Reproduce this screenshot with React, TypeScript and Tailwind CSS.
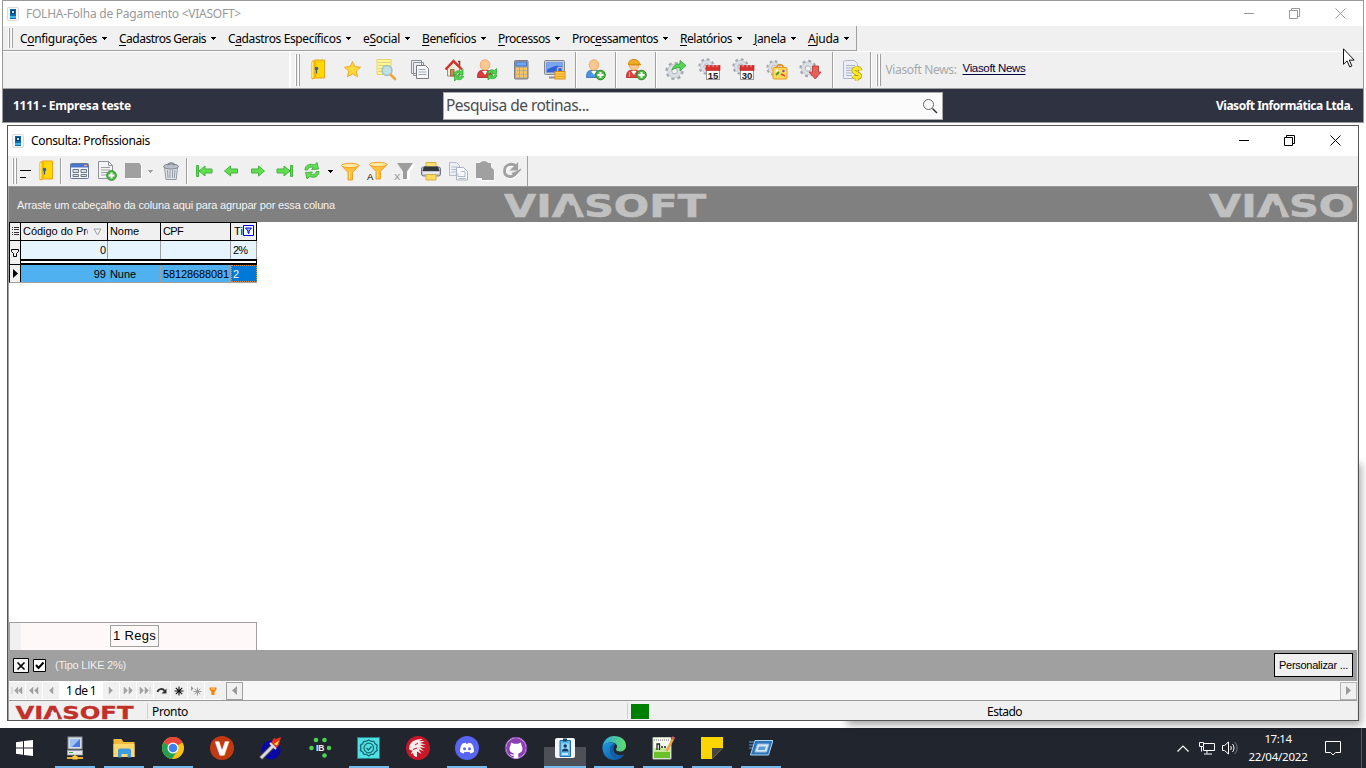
import React, { useLayoutEffect, useRef } from "react";

/* Text whose letter spacing is computed so that it fills a given width. */
function Fit({ w, className = "", children }: { w: number; className?: string; children: React.ReactNode }) {
  const ref = useRef<HTMLSpanElement>(null);
  useLayoutEffect(() => {
    const el = ref.current;
    if (!el) return;
    el.style.letterSpacing = "0px";
    const natural = el.getBoundingClientRect().width;
    const n = (el.textContent || "").length || 1;
    el.style.letterSpacing = `${(w - natural) / n}px`;
  }, [w]);
  return (
    <span ref={ref} className={`inline-block shrink-0 whitespace-nowrap ${className}`}>
      {children}
    </span>
  );
}

type SvgProps = { children: React.ReactNode; size?: number };
const Svg = ({ children, size = 24 }: SvgProps) => (
  <svg width={size} height={size} viewBox={`0 0 ${size} ${size}`} className="block shrink-0" fill="none">
    {children}
  </svg>
);

/* ---------- brand ---------- */
function Logo({ w, h, color, back, className = "" }: { w: number; h: number; color: string; back: string; className?: string }) {
  return (
    <svg width={w} height={h} viewBox="0 0 200 26" preserveAspectRatio="none" className={`block shrink-0 overflow-visible ${className}`}>
      <text x="-1" y="25.5" textLength="202" lengthAdjust="spacingAndGlyphs" fill={color} stroke={color} strokeWidth="0.6" className="font-['DejaVu_Sans',sans-serif] text-[34px] font-bold">
        VIASOFT
      </text>
      <path d="M60.5 14h8.5l3.2 12h-15z" fill={back} />
    </svg>
  );
}

/* ---------- shared icon parts ---------- */
const Cog = ({ cx, cy, s = 1 }: { cx: number; cy: number; s?: number }) => (
  <g transform={`translate(${cx} ${cy}) scale(${s})`}>
    <circle r="7.6" stroke="#a2a6ae" strokeWidth="3" strokeDasharray="3 2.970" />
    <circle r="5" stroke="#dcdfe5" strokeWidth="3.8" />
    <circle r="6.8" stroke="#b4b8bf" strokeWidth="0.6" />
    <circle r="2.9" stroke="#9a9ea6" strokeWidth="0.8" fill="#f0f0f0" />
  </g>
);
const Plus = ({ cx, cy }: { cx: number; cy: number }) => (
  <g>
    <circle cx={cx} cy={cy} r="4.8" fill="#4fb845" stroke="#2c8a28" />
    <path d={`M${cx - 3} ${cy}h6M${cx} ${cy - 3}v6`} stroke="#fff" strokeWidth="2" />
  </g>
);
const Recycle = ({ x, y }: { x: number; y: number }) => (
  <g transform={`translate(${x} ${y})`}>
    <path d="M.5 5C1 1.500 5 .5 7.500 2L9.500 0v5.200H4.500L6 3.700C4.500 3 3 3.700 2.800 5.200zM10 6.500C9.500 10 5.500 11 3 9.500L1 11.500V6.300h5L4.500 7.800C6 8.500 7.500 7.800 7.700 6.300z" fill="#4fd84c" stroke="#22a026" strokeWidth=".7" />
  </g>
);
const Calendar = ({ day }: { day: string }) => (
  <g>
    <rect x="8.500" y="8.500" width="13" height="13" fill="#fafafa" stroke="#9b9b9f" />
    <rect x="8" y="7.500" width="14" height="5" fill="#d8332e" stroke="#a8201e" strokeWidth=".6" />
    <path d="M11 7v2M15 7v2M19 7v2" stroke="#f3a8a4" />
    <text x="15" y="20.500" textAnchor="middle" fill="#222" className="font-['Liberation_Sans',sans-serif] text-[9.500px] font-bold">{day}</text>
  </g>
);

const DoorIcon = () => (
  <Svg>
    <path d="M5 3.500l3-1.500h9.500V20H8l-3 1z" fill="#ffd800" stroke="#f0a01a" />
    <path d="M8 3v17" stroke="#f8a516" strokeWidth="1.500" />
    <path d="M5.500 4v16" stroke="#ffe866" />
    <circle cx="9.500" cy="10.500" r="1.800" fill="#2a5fa8" />
    <path d="M9.500 12v3.500" stroke="#2a5fa8" strokeWidth="1.300" />
  </Svg>
);
const StarIcon = () => (
  <Svg>
    <path d="M11.500 3.500l2.300 5 5.700.7-4.200 3.900 1.200 5.600-5-2.800-5 2.800 1.200-5.600L3.500 9.200l5.700-.7z" fill="#ffd83a" stroke="#f5a623" strokeLinejoin="round" />
  </Svg>
);
const NoteSearchIcon = () => (
  <Svg>
    <path d="M3 1.500h14v15H3z" fill="#fff89a" stroke="#e6d46a" />
    <path d="M4 4.500h12M4 7.500h12M4 10.500h12M4 13.500h12" stroke="#e0d070" />
    <circle cx="13" cy="12.500" r="5" fill="#b9e0ee" fillOpacity=".9" stroke="#9fbfca" strokeWidth="1.400" />
    <path d="M17 17l4 4" stroke="#f0a63a" strokeWidth="2.600" strokeLinecap="round" />
  </Svg>
);
const PagesIcon = () => (
  <Svg>
    <path d="M3.500 2.500h10v13h-10zM5.500 4.500h10v13h-10z" fill="#eceef1" stroke="#8b8f96" />
    <path d="M8.500 7.500h9l3 3v10h-12z" fill="#f8f9fa" stroke="#777b82" />
    <path d="M10.500 11.500h7M10.500 14h8M10.500 16.500h8" stroke="#9ca5b5" />
  </Svg>
);
const HouseIcon = () => (
  <Svg>
    <path d="M5.500 10.500l6-6 6 6V18h-12z" fill="#f3ead8" stroke="#a68e72" />
    <path d="M16 3.500h1.500v5" stroke="#8d3a2d" strokeWidth="1.600" />
    <path d="M3.500 11.500l8-8.500 8.500 8.500" stroke="#d23530" strokeWidth="2.400" />
    <path d="M8.500 18v-6.500h3.500V18z" fill="#c98a4a" stroke="#8a5a30" strokeWidth=".8" />
    <Recycle x={11.500} y={11.500} />
  </Svg>
);
const Person = ({ body, edge }: { body: string; edge: string }) => (
  <g>
    <path d="M2.500 19.500c0-5 1.500-7 4-7h6c3 0 4.500 3 4.500 7z" fill={body} stroke={edge} strokeWidth=".8" />
    <path d="M7 13l3 4 2.500-4z" fill="#fff" />
    <ellipse cx="10" cy="7" rx="4.800" ry="5.300" fill="#fbc791" stroke="#ea9f5c" strokeWidth=".8" />
  </g>
);
const PersonRefreshIcon = () => (
  <Svg>
    <Person body="#d83b38" edge="#a82222" />
    <Recycle x={12} y={10.500} />
  </Svg>
);
const CalculatorIcon = () => (
  <Svg>
    <rect x="5.500" y="2.500" width="13.500" height="18.500" rx="1" fill="#a9a9ab" stroke="#7d7d81" />
    <rect x="7" y="4" width="10.500" height="4" fill="#6da6f4" stroke="#3a63b0" strokeWidth=".7" />
    <path d="M7 11h3M11 11h3M15 11h3M7 14.500h3M11 14.500h3M15 14.500h3M7 18h3M11 18h3M15 18h3" stroke="#ffc65c" strokeWidth="2.400" />
  </Svg>
);
const MonitorLockIcon = () => (
  <Svg>
    <rect x="1.500" y="2.500" width="20" height="14" rx="1" fill="#c9ccd2" stroke="#83878f" />
    <rect x="3.500" y="4.500" width="16" height="10" fill="#2f62d8" />
    <path d="M3.500 4.500h16v4C14 6.500 9 9 3.500 12z" fill="#7aa5f4" />
    <path d="M6 19.500h8" stroke="#8b8f96" strokeWidth="2" />
    <path d="M14.500 14v-2.500c0-3 5-3 5 0V14" stroke="#b4b6bb" strokeWidth="1.600" />
    <rect x="12" y="13.500" width="10" height="7.500" fill="#ffc94a" stroke="#d98c14" />
    <path d="M12.500 16h9M12.500 18.500h9" stroke="#f3a01e" />
  </Svg>
);
const PersonAddIcon = () => (
  <Svg>
    <Person body="#4a95e4" edge="#2a6ab4" />
    <Plus cx={16.500} cy={17} />
  </Svg>
);
const WorkerAddIcon = () => (
  <Svg>
    <Person body="#e0413c" edge="#a82222" />
    <path d="M4.500 6.500C4 3 7 1.500 10 1.500s6 2 5.500 5.500z" fill="#f5ac24" stroke="#c47f12" strokeWidth=".8" />
    <path d="M4 6.500h13" stroke="#d8920f" strokeWidth="1.500" />
    <path d="M5.500 14v5M13.500 14v2" stroke="#f4b642" />
    <Plus cx={17.500} cy={17} />
  </Svg>
);
const CogShareIcon = () => (
  <Svg>
    <Cog cx={10.500} cy={13} />
    <path d="M8 12c1-4 4-6 8-6V2.500l6 5-6 5.500V9.500c-3 0-5 .5-8 2.500z" fill="#56d556" stroke="#2f9f33" strokeWidth=".8" />
  </Svg>
);
const CogCalendarIcon = ({ day }: { day: string }) => (
  <Svg>
    <Cog cx={8.500} cy={8.500} s={0.900} />
    <Calendar day={day} />
  </Svg>
);
const CogBagIcon = () => (
  <Svg>
    <Cog cx={9} cy={10} s={0.850} />
    <path d="M12 9c0-3 6-3 6 0" stroke="#e38d15" strokeWidth="1.600" />
    <rect x="8" y="9.500" width="14" height="11.500" rx="1" fill="#ffd85a" stroke="#ee9a1c" />
    <path d="M11 17l3-3" stroke="#3a9b3a" strokeWidth="1.800" />
    <path d="M16 16l4 2" stroke="#e4423a" strokeWidth="1.500" />
    <circle cx="18.500" cy="13" r="1.200" fill="#6850d0" />
    <path d="M11 12.500h2" stroke="#fff" strokeWidth="2" />
  </Svg>
);
const CogDownIcon = () => (
  <Svg>
    <Cog cx={9} cy={10.500} s={0.950} />
    <path d="M13.500 8h6v6H22l-5.700 7-6.300-7h3.500z" fill="#e8605a" stroke="#b8302c" strokeWidth=".8" />
  </Svg>
);
const DocMoneyIcon = () => (
  <Svg>
    <path d="M3.500 3.500l2-1h9l3 3v15h-14z" fill="#eceef4" stroke="#b4b8c4" />
    <path d="M6 7.500h9M6 10h8M6 12.500h6M6 15h6M6 17.500h6" stroke="#a9b1cc" />
    <path d="M20.500 12.500c-1-3.500-7.500-3-7 .5.500 3 6.500 2 6.500 4.700 0 2.500-5 2.800-7 .3M16.800 8.500v14" stroke="#b79c0c" strokeWidth="4" />
    <path d="M20.500 12.500c-1-3.500-7.500-3-7 .5.500 3 6.500 2 6.500 4.700 0 2.500-5 2.800-7 .3M16.800 8.500v14" stroke="#fbe92c" strokeWidth="2.500" />
    <path d="M15.500 13h3M15 17.500h3" stroke="#a48c10" strokeWidth=".8" />
  </Svg>
);

/* ---------- consultation toolbar icons ---------- */
const TableIcon = () => (
  <Svg size={22}>
    <rect x="1.500" y="3.500" width="18" height="15" rx="1" fill="#f4f7fc" stroke="#66779e" />
    <rect x="2" y="4" width="17" height="3.500" fill="#4a78c8" />
    <path d="M15 5.500h3" stroke="#e8a090" strokeWidth="1.500" />
    <path d="M4 9.500h5.500v3H4zM12 9.500h5.500v3H12zM4 14.500h5.500v2H4zM12 14.500h5.500v2H12z" fill="#dfe3ea" stroke="#6e7480" />
  </Svg>
);
const DocAddIcon = () => (
  <Svg size={22}>
    <path d="M1.500 1.500h10l4 4v13h-14z" fill="#f3f4f5" stroke="#8e9299" />
    <path d="M11.500 1.500v4h4" stroke="#8e9299" />
    <path d="M4 7.500h9M4 10h9M4 12.500h7M4 15h6" stroke="#9aa0a8" />
    <Plus cx={14.500} cy={15.500} />
  </Svg>
);
const DisabledSaveIcon = () => (
  <Svg size={22}>
    <path d="M4 4h16v15H4z" fill="#fff" />
    <path d="M3 3h14l2 2v13H3z" fill="#a0a0a0" />
  </Svg>
);
const TrashIcon = () => (
  <Svg size={22}>
    <path d="M4.500 7h13l-1.300 12.500H6z" fill="#dfe3e8" stroke="#9199a3" />
    <ellipse cx="11" cy="6.500" rx="7.500" ry="2.500" fill="#b9c0c9" stroke="#7d8590" />
    <path d="M8 5.500c0-3.500 6-3.500 6 0" stroke="#7d8590" strokeWidth="1.300" />
    <path d="M7.500 10l.6 8M10 10v8M12.500 10v8M15 10l-.6 8" stroke="#949ba5" />
  </Svg>
);
const ArrowIcon = ({ left, bar }: { left?: boolean; bar?: boolean }) => (
  <Svg size={22}>
    <g transform={left ? "" : "translate(22 0) scale(-1 1)"} fill="#62dc50" stroke="#44b43c" strokeLinejoin="round">
      {bar && <path d="M3.500 5.500h2v11h-2z" />}
      <path d={bar ? "M6 11l6-5v3h7v4h-7v3z" : "M4.500 11l6-5v3h7v4h-7v3z"} />
    </g>
  </Svg>
);
const RefreshIcon = () => (
  <Svg size={22}>
    <path d="M4 10C4 5 9 3 13.500 5L16 2.500l1.500 6.500-7 .5L12.500 7.500C10 6.500 7 7.500 6.500 10zM18 11.500c0 5-5 7-9.500 5L6 19l-1.500-6.500 7-.5-2 2c2.500 1 5.500 0 6-2.500z" fill="#66dc58" stroke="#3cae36" strokeWidth=".9" />
  </Svg>
);
const FunnelIcon = ({ letter }: { letter?: string }) => (
  <Svg size={22}>
    <g transform={letter ? "translate(1 -1)" : ""}>
      <path d="M2.500 5.500l6.500 7V20h4.500v-7.500l6.500-7z" fill="#ffc13c" stroke="#f0a02c" />
      <ellipse cx="11.200" cy="5.500" rx="8.700" ry="2.200" fill="#ffeaa2" stroke="#f0a02c" />
      <path d="M10.500 12v7" stroke="#ffe48c" />
    </g>
    {letter && <text x="1" y="20" fill="#000" className="font-['Liberation_Sans',sans-serif] text-[9.500px]">{letter}</text>}
  </Svg>
);
const DisabledFunnelIcon = () => (
  <Svg size={22}>
    <path d="M6 4h16l-5 8v8h-4v-8z" fill="#fff" />
    <path d="M4 3h16l-6 8.500V19h-4v-7.500z" fill="#9d9d9d" />
    <text x="1" y="20" fill="#8d8d8d" className="font-['Liberation_Sans',sans-serif] text-[9.500px]">X</text>
  </Svg>
);
const PrinterIcon = () => (
  <Svg size={22}>
    <path d="M6 2.500h10v5H6z" fill="#ffe275" stroke="#d4b044" />
    <rect x="1.500" y="7" width="19" height="9" rx="2" fill="#bcc3d0" stroke="#6f7686" />
    <path d="M4 6.500h14l1.500 4.500h-17z" fill="#33373e" />
    <path d="M3 13h16" stroke="#f2f5fa" strokeWidth="1.500" />
    <path d="M6 14.500h10v5.500H6z" fill="#ffd95c" stroke="#d4b044" />
  </Svg>
);
const CopyIcon = () => (
  <Svg size={22}>
    <path d="M2.500 2.500h7l3 3v10h-10z" fill="#eceff5" stroke="#b5bdcc" />
    <path d="M4.500 7h6M4.500 9.500h6M4.500 12h6" stroke="#b5bdcc" />
    <path d="M9.500 7.500h7l4 4v8.500h-11z" fill="#f6f8fb" stroke="#aab3c4" />
    <path d="M14 11.500h4v5h-7v-3M11.500 18.500h7" stroke="#b0b9ca" />
  </Svg>
);
const DisabledPasteIcon = () => (
  <Svg size={22}>
    <path d="M3 4h4l3-2h3l2 2h3v4l3 3v10H8v-1H3z" fill="#fff" />
    <path d="M2 3h4c1-2.500 7-2.500 8 0h3v4l3 3v10H8v-2H2z" fill="#a0a0a0" />
  </Svg>
);
const DisabledRedoIcon = () => (
  <Svg size={22}>
    <path d="M15 6C11 2.500 3.500 4.500 3.500 11c0 6 8 7.500 11 2.500" stroke="#fff" strokeWidth="2.600" transform="translate(1 1)" />
    <path d="M15 6C11 2.500 3.500 4.500 3.500 11c0 6 8 7.500 11 2.500" stroke="#a0a0a0" strokeWidth="2.800" />
    <path d="M10 10h6.500V3.500zM11 13l3 2.500 6-6.500" fill="#a0a0a0" stroke="#a0a0a0" strokeWidth="1.200" />
  </Svg>
);
const AppIcon = () => (
  <svg width="12" height="14" viewBox="0 0 12 14" className="block shrink-0">
    <rect x=".5" y=".5" width="11" height="13" rx="1" fill="#f8f8f8" stroke="#d9d9d9" />
    <rect x="3" y="2" width="6" height="10" fill="#0d6aad" />
    <rect x="4" y="3" width="4" height="4" fill="#0a3d66" />
    <rect x="5" y="4" width="2" height="2" fill="#c7e6f7" />
    <rect x="3" y="9" width="6" height="2" fill="#43b4ea" />
  </svg>
);

/* ---------- small pieces ---------- */
const Caret = ({ className = "text-black" }: { className?: string }) => (
  <svg width="5" height="3" viewBox="0 0 5 3" shapeRendering="crispEdges" className={`block shrink-0 ${className}`}><path d="M0 0h5v1H4v1H3v1H2V2H1V1H0z" fill="currentColor" /></svg>
);
const Grip = () => (
  <div className="flex shrink-0 gap-[1px] self-stretch py-[2px]">
    <div className="w-[2px] border-r border-[#a0a0a0] bg-white" />
    <div className="w-[2px] border-r border-[#a0a0a0] bg-white" />
  </div>
);
const Sep = ({ className = "" }: { className?: string }) => <div className={`w-[2px] shrink-0 self-stretch border-r border-white bg-[#a0a0a0] ${className}`} />;

function WindowButtons({ className }: { className: string }) {
  return (
    <div className={`flex items-center gap-[35px] ${className}`}>
      <svg width="11" height="11" viewBox="0 0 11 11"><path d="M1 5.500h10" stroke="currentColor" /></svg>
      <svg width="11" height="11" viewBox="0 0 11 11" fill="none" stroke="currentColor"><path d="M.5 2.500h8v8h-8zM2.500 2.500v-2h8v8h-2" /></svg>
      <svg width="11" height="11" viewBox="0 0 11 11" fill="none" stroke="currentColor"><path d="M.5.500l10 10M10.500.500l-10 10" /></svg>
    </div>
  );
}

const MENUS: { pre: string; key: string; post: string; w: number; cell: string }[] = [
  { pre: "C", key: "o", post: "nfigurações", w: 77, cell: "w-[99px]" },
  { pre: "", key: "C", post: "adastros Gerais", w: 87, cell: "w-[109px]" },
  { pre: "C", key: "a", post: "dastros Específicos", w: 113, cell: "w-[135px]" },
  { pre: "e", key: "S", post: "ocial", w: 37, cell: "w-[59px]" },
  { pre: "", key: "B", post: "enefícios", w: 54, cell: "w-[76px]" },
  { pre: "", key: "P", post: "rocessos", w: 52, cell: "w-[74px]" },
  { pre: "Proc", key: "e", post: "ssamentos", w: 86, cell: "w-[108px]" },
  { pre: "", key: "R", post: "elatórios", w: 52, cell: "w-[74px]" },
  { pre: "", key: "J", post: "anela", w: 32, cell: "w-[54px]" },
  { pre: "", key: "A", post: "juda", w: 31, cell: "w-[48px]" },
];

const Cell34 = ({ children }: { children: React.ReactNode }) => <div className="flex w-[33.7px] shrink-0 justify-center">{children}</div>;
const Cell27 = ({ children }: { children: React.ReactNode }) => <div className="flex w-[27px] shrink-0 justify-center">{children}</div>;

function MainWindow() {
  return (
    <header className="ml-[2px] flex h-[123px] w-[1362px] flex-col border border-[#999999] bg-[#f0f0f0]">
      <div className="flex h-[25px] items-center bg-white pl-[4px] pr-[17px] text-[#999]">
        <AppIcon />
        <Fit w={215} className="ml-[7px] text-[12px]">FOLHA-Folha de Pagamento &lt;VIASOFT&gt;</Fit>
        <WindowButtons className="ml-auto text-[#999]" />
      </div>
      <div className="flex h-[25px]">
        <nav className="flex w-[854px] items-center border-b border-r border-[#a0a0a0] pl-[5px] text-[12px] text-black">
          <Grip />
          <div className="ml-[7px] flex pt-[1px]">
            {MENUS.map((m) => (
              <div key={m.pre + m.key + m.post} className={`flex shrink-0 items-center ${m.cell}`}>
                <Fit w={m.w} className="mr-[5px]">{m.pre}<u className="underline-offset-2">{m.key}</u>{m.post}</Fit>
                <Caret />
              </div>
            ))}
          </div>
        </nav>
      </div>
      <div className="flex h-[38px] items-center border-b border-t border-b-[#a0a0a0] border-t-white">
        <div className="h-full w-[288px] border-r-2 border-white" />
        <div className="ml-[4px] flex h-full items-center">
          <Grip />
          <div className="flex pl-[2px]">
            <Cell34><DoorIcon /></Cell34>
            <Cell34><StarIcon /></Cell34>
            <Cell34><NoteSearchIcon /></Cell34>
            <Cell34><PagesIcon /></Cell34>
            <Cell34><HouseIcon /></Cell34>
            <Cell34><PersonRefreshIcon /></Cell34>
            <Cell34><CalculatorIcon /></Cell34>
            <Cell34><MonitorLockIcon /></Cell34>
          </div>
          <Sep className="ml-[3px]" />
          <div className="flex w-[38px] justify-center"><PersonAddIcon /></div>
          <Sep />
          <div className="flex w-[38px] justify-center"><WorkerAddIcon /></div>
          <Sep />
          <div className="flex w-[175px] pl-[3px]">
            <Cell34><CogShareIcon /></Cell34>
            <Cell34><CogCalendarIcon day="15" /></Cell34>
            <Cell34><CogCalendarIcon day="30" /></Cell34>
            <Cell34><CogBagIcon /></Cell34>
            <Cell34><CogDownIcon /></Cell34>
          </div>
          <Sep />
          <div className="flex w-[36px] justify-center"><DocMoneyIcon /></div>
          <Sep className="mr-[4px]" />
          <Grip />
          <Fit w={71} className="ml-[5px] text-[12px] text-[#a8a8a8]">Viasoft News:</Fit>
          <Fit w={63} className="-mt-[2px] ml-[6px] font-['Liberation_Sans',sans-serif] text-[11.500px] text-[#000040] underline underline-offset-2">Viasoft News</Fit>
        </div>
      </div>
      <div className="flex h-[33px] items-center bg-[#2f3241] pl-[10px] pr-[10px] text-[12px] font-bold text-white">
        <Fit w={118}>1111 - Empresa teste</Fit>
        <div className="ml-[312px] flex h-[28px] w-[500px] items-center justify-between border border-[#a9a9ad] bg-[#fbfbfb] pl-[2px] pr-[4px] font-normal text-[#4c4c50]">
          <Fit w={143} className="text-[15.500px]">Pesquisa de rotinas...</Fit>
          <svg width="16" height="16" viewBox="0 0 16 16" fill="none"><circle cx="6.500" cy="6.500" r="5" stroke="#666" /><path d="M10.500 10.500l4.500 4.500" stroke="#333" strokeWidth="1.500" /></svg>
        </div>
        <Fit w={137} className="ml-auto">Viasoft Informática Ltda.</Fit>
      </div>
    </header>
  );
}

function QueryToolbar() {
  return (
    <div className="flex h-[31px] border-b border-[#999] bg-[#f0f0f0]">
      <div className="flex w-[520px] items-center border-r border-[#a0a0a0] pl-[4px]">
        <Grip />
        <svg width="13" height="10" viewBox="0 0 13 10" className="ml-[2px] mt-[5px] shrink-0"><path d="M1 1.500h11M1 8.500h6" stroke="#000" /></svg>
        <div className="ml-[3px]"><DoorIcon /></div>
        <Sep className="my-[2px] ml-[1px] mr-[7px]" />
        <TableIcon />
        <div className="ml-[6px]"><DocAddIcon /></div>
        <div className="ml-[3px]"><DisabledSaveIcon /></div>
        <div className="ml-[4px]"><Caret className="text-[#a0a0a0]" /></div>
        <div className="ml-[7px]"><TrashIcon /></div>
        <Sep className="my-[2px] ml-[4px] mr-[2px]" />
        <Cell27><ArrowIcon left bar /></Cell27>
        <Cell27><ArrowIcon left /></Cell27>
        <Cell27><ArrowIcon /></Cell27>
        <Cell27><ArrowIcon bar /></Cell27>
        <Cell27><RefreshIcon /></Cell27>
        <div className="flex w-[11px] shrink-0 justify-center"><Caret /></div>
        <Cell27><FunnelIcon /></Cell27>
        <Cell27><FunnelIcon letter="A" /></Cell27>
        <Cell27><DisabledFunnelIcon /></Cell27>
        <Cell27><PrinterIcon /></Cell27>
        <Cell27><CopyIcon /></Cell27>
        <Cell27><DisabledPasteIcon /></Cell27>
        <Cell27><DisabledRedoIcon /></Cell27>
      </div>
    </div>
  );
}

function DataGrid() {
  return (
    <div className="flex w-[248px] flex-col font-['Liberation_Sans',sans-serif] text-[11px] leading-[17px] text-black">
      <div className="flex h-[19px] border-y border-l border-black bg-[#f0f0f0]">
        <div className="flex w-[11px] items-center justify-center border-r border-black">
          <svg width="7" height="9" viewBox="0 0 7 9"><path d="M0 .5h1M2 .5h5M0 2.500h1M2 2.500h5M0 5.500h1M2 5.500h5M0 7.500h1M2 7.500h5" stroke="#333" /></svg>
        </div>
        <div className="flex w-[87px] items-center border-r border-black pl-[2px]">
          <div className="w-[65px] overflow-hidden"><Fit w={70}>Código do Pro</Fit></div>
          <svg width="9" height="8" viewBox="0 0 9 8" className="ml-[5px] shrink-0" fill="none"><path d="M1 1h7L4.500 7z" stroke="#a0a0a0" /></svg>
        </div>
        <div className="w-[53px] border-r border-black pl-[2px]"><Fit w={29}>Nome</Fit></div>
        <div className="w-[70px] border-r border-black pl-[2px]"><Fit w={20}>CPF</Fit></div>
        <div className="flex w-[26px] items-center border-r border-black pl-[3px]">
          <Fit w={9}>Ti</Fit>
          <svg width="11" height="11" viewBox="0 0 11 11" className="mb-[2px] shrink-0"><path d="M.5.500h10v10H.5z" fill="#fff" stroke="#0000e8" /><path d="M2.500 3h6L6 6v2.500L5 8V6z" fill="#9fc4ff" stroke="#0000e8" /></svg>
        </div>
      </div>
      <div className="flex h-[18px] border-l border-black bg-[#e6f4ff] pt-0">
        <div className="flex w-[11px] items-end justify-center border-r border-black bg-[#f0f0f0]">
          <svg width="9" height="9" viewBox="0 0 9 9" className="mb-[2px]" fill="none"><path d="M.5 1.500h7v2L5.500 5.500v3h-3v-3l-2-2z" stroke="#000" /></svg>
        </div>
        <div className="w-[87px] border-r border-[#a0a0a0] pr-[1px] pt-[1px] text-right">0</div>
        <div className="w-[53px] border-r border-[#a0a0a0]" />
        <div className="w-[70px] border-r border-[#a0a0a0]" />
        <div className="w-[26px] border-r border-[#a0a0a0] pl-[2px] pt-[1px]"><Fit w={14}>2%</Fit></div>
      </div>
      <div className="flex h-[6px] border-l border-black bg-[#f0f0f0]">
        <div className="w-[11px] border-b border-r border-black" />
        <div className="flex-1 border-y-2 border-r border-black bg-white" />
      </div>
      <div className="flex h-[18px] border-b border-l border-b-[#a0a0a0] border-l-black bg-[#4fb1ef]">
        <div className="flex w-[11px] items-center justify-center border-r border-black bg-[#f0f0f0]">
          <svg width="5" height="9" viewBox="0 0 5 9"><path d="M0 0v9l5-4.500z" fill="#000" /></svg>
        </div>
        <div className="w-[87px] border-r border-[#a0a0a0] pr-[1px] pt-[1px] text-right">99</div>
        <div className="w-[53px] border-r border-[#a0a0a0] pl-[2px] pt-[1px]"><Fit w={26}>Nune</Fit></div>
        <div className="w-[70px] border-r border-[#a0a0a0] pl-[2px] pt-[1px]"><Fit w={66}>58128688081</Fit></div>
        <div className="w-[26px] border border-dotted border-[#e08a40] bg-[#0078d7] pl-[1px] leading-[17px] text-white">2</div>
      </div>
    </div>
  );
}

const NAV_L = ["M1 1v7M7 1L3.500 4.500 7 8zM11 1L7.500 4.500 11 8z", "M5 1L1.500 4.500 5 8zM10 1L6.500 4.500 10 8z", "M8 1L4.500 4.500 8 8z"];
const NAV_R = ["M4 1l3.500 3.500L4 8z", "M2 1l3.500 3.500L2 8zM7 1l3.500 3.500L7 8z", "M1 1l3.500 3.500L1 8zM6 1l3.500 3.500L6 8zM11 1v7"];
const NavCell = ({ children }: { children: React.ReactNode }) => (
  <div className="flex h-[17px] w-[16px] shrink-0 items-center justify-center bg-[#f0f0f0]">
    <svg width="12" height="10" viewBox="0 0 12 10" fill="none">{children}</svg>
  </div>
);

function NavRow() {
  return (
    <div className="flex h-[20px] items-center border-b border-[#999] bg-white">
      <div className="flex gap-[1px]">
        {NAV_L.map((d) => <NavCell key={d}><path d={d} fill="#a0a0a0" stroke="#a0a0a0" strokeWidth=".5" /></NavCell>)}
      </div>
      <div className="flex w-[44px] justify-center pt-[1px] text-[12px] text-black"><Fit w={30}>1 de 1</Fit></div>
      <div className="flex gap-[1px]">
        {NAV_R.map((d) => <NavCell key={d}><path d={d} fill="#a0a0a0" stroke="#a0a0a0" strokeWidth=".5" /></NavCell>)}
        <NavCell><path d="M1.500 6C2 2.500 7 2 8.500 5" stroke="#333" strokeWidth="1.800" /><path d="M10.500 2.500v5h-5z" fill="#333" /></NavCell>
        <NavCell><path d="M6 .5v9M1.500 5h9M2.800 1.800l6.400 6.400M9.200 1.800L2.800 8.200" stroke="#111" strokeWidth="1.100" /></NavCell>
        <NavCell><path d="M1 0v5l2.500-2.500z" fill="#999" /><path d="M7.500 1.500v8M3.500 5.500h8M4.700 2.700l5.600 5.600M10.300 2.700L4.700 8.300" stroke="#999" /></NavCell>
        <NavCell><path d="M2.500 1.500h7v2L7.500 6v3h-3V6l-2-2.500z" fill="#ff8000" /><path d="M4 3h4" stroke="#ffe0b0" /></NavCell>
      </div>
      <div className="h-full w-[5px] bg-[#f0f0f0]" />
      <div className="flex h-[18px] w-[17px] shrink-0 items-center justify-center border border-[#a0a0a0] bg-[#f0f0f0]">
        <svg width="5" height="9" viewBox="0 0 5 9"><path d="M5 0v9L0 4.500z" fill="#999" /></svg>
      </div>
      <div className="h-full flex-1 bg-[#f7f7f7]" />
      <div className="flex h-[18px] w-[17px] shrink-0 items-center justify-center border border-[#b4b4b4] bg-[#f0f0f0]">
        <svg width="5" height="9" viewBox="0 0 5 9"><path d="M0 0v9l5-4.500z" fill="#999" /></svg>
      </div>
    </div>
  );
}

function QueryWindow() {
  return (
    <main className="relative ml-[7px] mt-[2px] flex h-[596px] w-[1352px] flex-col border border-[#555] bg-white">
      <div className="flex h-[30px] items-center pl-[4px] pr-[17px] text-[12px] text-black">
        <AppIcon />
        <Fit w={119} className="ml-[7px]">Consulta: Profissionais</Fit>
        <WindowButtons className="-mt-[2px] ml-auto" />
      </div>
      <QueryToolbar />
      <div className="flex flex-1 flex-col border-l border-r border-l-[#a0a0a0] border-r-[#e3e3e3]">
        <div className="flex h-[35px] shrink-0 items-center overflow-hidden bg-[#808080] pl-[8px]">
          <Fit w={318} className="pt-[2px] font-['Liberation_Sans',sans-serif] text-[11px] text-[#f4f4f4]">Arraste um cabeçalho da coluna aqui para agrupar por essa coluna</Fit>
          <Logo w={200} h={25} color="#c0c0c0" back="#808080" className="mb-[1px] ml-[170px]" />
          <Logo w={200} h={25} color="#c0c0c0" back="#808080" className="mb-[1px] ml-[505px]" />
        </div>
        <DataGrid />
        <div className="flex-1" />
        <div className="flex h-[28px] w-[248px] items-center border border-b-0 border-[#a0a0a0] bg-[#fff8f8]">
          <div className="h-full w-[11px] bg-[#f0f0f0]" />
          <div className="mb-[1px] ml-[89px] flex h-[22px] w-[49px] items-center justify-center border border-[#a0a0a0] font-['Liberation_Sans',sans-serif] text-[13px] text-black"><Fit w={43}>1 Regs</Fit></div>
        </div>
        <div className="flex h-[31px] shrink-0 items-center bg-[#a0a0a0] pl-[4px] pr-[4px] font-['Liberation_Sans',sans-serif] text-[11px]">
          <svg width="16" height="16" viewBox="0 0 16 16" fill="none"><path d="M.5.500h15v14H.5z" fill="#f4f4f4" stroke="#000" /><path d="M4.500 4.500l7 7M11.500 4.500l-7 7" stroke="#000" strokeWidth="1.600" /></svg>
          <svg width="14" height="14" viewBox="0 0 14 14" fill="none" className="ml-[4px]"><path d="M.5.500h12v12H.5z" fill="#fff" stroke="#000" /><path d="M3 6l2.500 3 5-5.500" stroke="#000" strokeWidth="2" /></svg>
          <Fit w={71} className="ml-[8px] text-[#eee]">(Tipo LIKE 2%)</Fit>
          <button className="mb-[1px] ml-auto flex h-[24px] w-[79px] items-center justify-center border border-black bg-[#f0f0f0] text-black"><Fit w={69}>Personalizar ...</Fit></button>
        </div>
        <NavRow />
        <div className="flex h-[19px] shrink-0 items-center bg-[#f0f0f0] text-[12px] text-black">
          <Logo w={117} h={14} color="#c1302a" back="#f0f0f0" className="ml-[7px] mt-[2px]" />
          <div className="ml-[14px] h-[16px] w-px bg-[#d0d0d0]" />
          <Fit w={36} className="ml-[4px] mt-[2px]">Pronto</Fit>
          <div className="ml-[439px] h-[16px] w-px bg-[#d0d0d0]" />
          <div className="ml-[3px] mt-[2px] h-[15px] w-[18px] bg-[#008000]" />
          <Fit w={35} className="ml-[338px] mt-[2px]">Estado</Fit>
        </div>
      </div>
    </main>
  );
}

/* ---------- taskbar ---------- */
const Computer = () => (
  <Svg><rect x="5" y="1" width="14" height="12" fill="#d9dde2" stroke="#8a9098" /><rect x="7" y="3" width="10" height="8" fill="#4a78e0" /><path d="M7 3h10L9 11H7z" fill="#9dc0f7" /><rect x="4.500" y="14.500" width="15" height="4.500" fill="#e4e6e9" stroke="#9aa0a6" strokeWidth=".8" /><path d="M6 16.500h4" stroke="#38a838" /><path d="M12 19v2M4 22h16" stroke="#e9a92d" strokeWidth="1.800" /><path d="M9.500 20h5v3.500h-5z" fill="#ffc44a" /></Svg>
);
const Folder = () => (
  <Svg><path d="M1.500 3h8l2 3h11v15h-21z" fill="#f5b93b" /><path d="M1.500 8h21v13h-21z" fill="#ffd96e" /><path d="M6 21.500v-7c0-1 .5-2 2-2h9c1.500 0 2 1 2 2v7h-3.500v-3.500h-6v3.500z" fill="#3d9be0" /></Svg>
);
const Chrome = () => (
  <Svg><circle cx="12" cy="12" r="11" fill="#fbc116" /><path d="M12 12L2.500 6.500A11 11 0 0 1 21.500 6.500z" fill="#e8453c" /><path d="M12 1a11 11 0 0 1 9.500 5.500H12z" fill="#e8453c" /><path d="M2.500 6.500A11 11 0 0 0 11 23l5.500-8.500L12 12z" fill="#21a150" /><circle cx="12" cy="12" r="5.500" fill="#fff" /><circle cx="12" cy="12" r="4.300" fill="#3f80ee" /></Svg>
);
const VBadge = () => (
  <Svg><circle cx="12" cy="12" r="12" fill="#c23a12" /><text x="12" y="18.500" textAnchor="middle" fill="#fff" stroke="#fff" strokeWidth=".8" className="font-['DejaVu_Sans',sans-serif] text-[17px] font-bold">V</text></Svg>
);
const Torch = () => (
  <Svg><circle cx="12" cy="14" r="9.500" fill="#0808a8" /><path d="M1.500 22.500l13-13" stroke="#444" strokeWidth="5" /><path d="M2 22l13-13" stroke="#d9d9d9" strokeWidth="3" /><path d="M12 7l5 5 3-3 2-8-5 2-2-1z" fill="#ef2d1d" /><path d="M15 8l3 1.500 2-5z" fill="#fff04a" /><path d="M11 7l6 6" stroke="#ddd" strokeWidth="2" /></Svg>
);
const Ib = () => (
  <Svg>
    {[[8, 4], [16.500, 4], [3.500, 12], [21, 12], [16.500, 19.500]].map(([x, y]) => <circle key={`${x}-${y}`} cx={x} cy={y} r="2.300" fill="#4fd054" />)}
    <text x="12.200" y="15" textAnchor="middle" fill="#f2f2f2" className="font-['Liberation_Sans',sans-serif] text-[8.500px] font-bold">IB</text>
  </Svg>
);
const Seal = () => (
  <Svg><rect x=".5" y="1.500" width="22" height="21" fill="#4fe0e4" stroke="#24848c" /><path d="M11.800 4l2.300 1.300 2.600 0 1.300 2.300 2.200 1.600-.5 2.600.5 2.600-2.200 1.600-1.300 2.300h-2.600L11.800 20l-2.300-1.700H6.900L5.600 16l-2.200-1.600.5-2.600-.5-2.600 2.200-1.600 1.300-2.300h2.600z" stroke="#1b6670" strokeWidth="1.300" strokeLinejoin="round" /><circle cx="11.800" cy="12" r="4.800" stroke="#1b6670" strokeWidth="1.200" /><path d="M9.500 12l2 2 3-3.500" stroke="#1b6670" strokeWidth="1.400" /></Svg>
);
const Helmet = () => (
  <Svg><circle cx="12" cy="12" r="12" fill="#c81728" /><path d="M3 13C3 6 9 2.500 17 3l-4 2 6 0-5 2 6 1.500-6 .5 5.500 3-6-.7 4.500 4-5.500-2 3 4.700-4.500-2.500v5.500l-3-1-1-3-2.500 1.500L5 17.500l1.500-3-2.500-.5z" fill="#f8eceb" /><path d="M7 13.500l4-1.500M12 7l-3 2" stroke="#c81728" /></Svg>
);
const Discord = () => (
  <Svg><circle cx="12" cy="12" r="12" fill="#5865f2" /><path d="M5 16c0-4 1-7 2.500-8.500l3-.8.600 1h1.800l.600-1 3 .8C18 9 19 12 19 16l-3.500 1.500-1-1.500h-5l-1 1.500z" fill="#fff" /><circle cx="9.500" cy="12.800" r="1.500" fill="#5865f2" /><circle cx="14.500" cy="12.800" r="1.500" fill="#5865f2" /></Svg>
);
const GitHub = () => (
  <Svg><circle cx="12" cy="12" r="10.700" fill="#fff" stroke="#8b3fb2" strokeWidth="1" /><circle cx="12" cy="12" r="10" fill="#8b3fb2" /><path d="M7 6.500l3 1.300h4l3-1.300.5 3c2 3.500 1 7-3.200 8v4.700a10.500 10.500 0 0 1-4.600 0v-2.500c-2 .4-3-.6-3.900-2 1.600 0 2 1.300 3.900.8l.3-1C5.500 16.500 4.500 13 6.500 9.500z" fill="#fff" /></Svg>
);
const BadgeApp = () => (
  <Svg><rect x="2" y="2" width="20" height="20" rx="2" fill="#f5f5f5" /><path d="M7 4.500h10.500v16H7z" fill="#58b8ea" stroke="#1f6fae" /><path d="M10 2.500h4v3h-4z" fill="#16456e" /><rect x="8.500" y="7.500" width="7.500" height="8" fill="#9fd6f2" /><circle cx="12.200" cy="10" r="1.800" fill="#123e66" /><path d="M8.700 15.500c0-4 7-4 7 0z" fill="#123e66" /><path d="M9 18h6" stroke="#e8f6fd" strokeWidth="1.500" /></Svg>
);
const Edge = () => (
  <Svg>
    <defs>
      <linearGradient id="edgeTop" x1="0" y1="0" x2="1" y2="0"><stop stopColor="#2aa8e8" /><stop offset="1" stopColor="#62dd68" /></linearGradient>
      <linearGradient id="edgeLow" x1="0" y1="0" x2="1" y2="1"><stop stopColor="#1b9de2" /><stop offset="1" stopColor="#0c4f9c" /></linearGradient>
    </defs>
    <path d="M.5 11C1 4.500 6 0 12 0c7 0 12 4 12 9.500 0 4-3 6-6 6-2.500 0-4-1-4-2 0-.8 1-1.200 1-3C15 8 12.500 6.500 9 6.500c-4 0-7 2-8.500 4.500z" fill="url(#edgeTop)" />
    <path d="M.5 11C2 8 5 6.500 8.500 6.500c2 0 3.500.7 4.500 1.800C10 8.500 8 11 8 14c0 5 5 7.500 9.500 7l4.500-2c-2 3-6 5-10 5C5 24 0 18 .5 11z" fill="url(#edgeLow)" />
    <path d="M8 14c0 5 5 7.500 9.500 7 2-.3 4-1.500 5-2.700-4 2-11 .7-11-5 0-1.500.5-3 1.500-5C10 8.500 8 11 8 14z" fill="#135fab" />
  </Svg>
);
const Notes = () => (
  <Svg><path d="M2 1.500h18v21.500H2z" fill="#f6fbef" stroke="#bcc6b4" /><path d="M2.500 12h17v5h-17z" fill="#c4e89a" /><path d="M3 16h16v6H3z" fill="#6cc02a" /><path d="M3 4h16" stroke="#6a6a6a" strokeDasharray="1 1" /><path d="M6 14V8h2.500v6M10 11h2M13 11h2" stroke="#222" strokeWidth="1.300" /><path d="M22 3l-6.500 12" stroke="#f0a23a" strokeWidth="2.400" /><path d="M22.800 1l-1 2" stroke="#e06060" strokeWidth="2.800" /></Svg>
);
const Sticky = () => (
  <Svg><path d="M1 1h22v11l-11 11H1z" fill="#ffd500" /><path d="M12 12h11L12 23z" fill="#474747" /></Svg>
);
const RunApp = () => (
  <Svg><path d="M6 4.500h18L19.500 19h-18z" fill="#2f73b8" stroke="#a8d6f5" /><path d="M8.500 8h11.500l-2.500 8h-11.500z" fill="#d8e8f4" stroke="#8fbde0" /><path d="M10 10.500h7l-1.300 3.500h-7z" fill="#5a9bd4" /><path d="M0 6h6M0 9h4M0 12h3" stroke="#5da6de" /></Svg>
);
const TASKS: { name: string; Icon: () => React.ReactElement; state: "idle" | "open" | "active" }[] = [
  { name: "computer", Icon: Computer, state: "open" },
  { name: "folder", Icon: Folder, state: "open" },
  { name: "chrome", Icon: Chrome, state: "open" },
  { name: "v", Icon: VBadge, state: "idle" },
  { name: "torch", Icon: Torch, state: "idle" },
  { name: "ib", Icon: Ib, state: "idle" },
  { name: "seal", Icon: Seal, state: "open" },
  { name: "helmet", Icon: Helmet, state: "idle" },
  { name: "discord", Icon: Discord, state: "open" },
  { name: "github", Icon: GitHub, state: "idle" },
  { name: "badge", Icon: BadgeApp, state: "active" },
  { name: "edge", Icon: Edge, state: "open" },
  { name: "notes", Icon: Notes, state: "open" },
  { name: "sticky", Icon: Sticky, state: "open" },
  { name: "run", Icon: RunApp, state: "open" },
];
const TASK_STYLE = {
  idle: "w-[40px]",
  open: "w-[40px] border-b-2 border-[#76b9ed]",
  active: "w-[42px] border-b-2 border-[#76b9ed] bg-linear-to-b from-transparent from-50% to-[#4d5057] to-50%",
};

function Taskbar() {
  return (
    <footer className="mt-[7px] flex h-[40px] items-center bg-[#20252e] text-white">
      <div className="flex w-[50px] shrink-0 pl-[16px]">
        <svg width="17" height="16" viewBox="0 0 17 16"><path d="M0 2.200l7-1v6.300H0zM8 1l9-1v7.500H8zM0 8.500h7v6.300l-7-1zM8 8.500h9V16l-9-1.100z" fill="#fff" /></svg>
      </div>
      {TASKS.map(({ name, Icon, state }) => (
        <div key={name} className="flex h-full w-[49px] shrink-0 justify-center">
          <div className={`flex h-full justify-center pt-[8px] ${TASK_STYLE[state]}`}><Icon /></div>
        </div>
      ))}
      <div className="ml-auto flex h-full items-center">
        <svg width="12" height="7" viewBox="0 0 12 7" fill="none"><path d="M.5 6.500L6 1l5.500 5.500" stroke="#fff" strokeWidth="1.200" /></svg>
        <svg width="16" height="14" viewBox="0 0 16 14" fill="none" stroke="#fff" className="ml-[10px]"><path d="M5 2.500h10.500v7H4.500V6M8 9.500v3M5 13h8M.5 1.500h4v4h-4zM2.500 5.500v5" /></svg>
        <svg width="17" height="14" viewBox="0 0 17 14" fill="none" stroke="#fff" className="ml-[7px]"><path d="M.5 4.500h2l4-3.500v12l-4-3.500h-2zM8.500 5c1 1 1 3 0 4M10.500 3c2 2 2 6 0 8" /><path d="M12.500 1c3.500 3 3.500 9 0 12" stroke="#777c84" /></svg>
        <div className="ml-[9px] flex w-[60px] flex-col items-center text-[11.500px] leading-[18px]">
          <Fit w={27}>17:14</Fit>
          <Fit w={59}>22/04/2022</Fit>
        </div>
        <svg width="16" height="16" viewBox="0 0 16 16" fill="none" stroke="#fff" className="ml-[17px] mr-[20px]"><path d="M.5 1.500h15v11h-5L8 15l-2.500-2.500h-5z" /></svg>
        <div className="mr-[4px] h-full w-px bg-[#555a62]" />
      </div>
    </footer>
  );
}

export default function App() {
  return (
    <div className="relative flex h-[768px] w-[1366px] flex-col overflow-hidden bg-white font-['Noto_Sans',sans-serif]">
      <div className="absolute left-[850px] top-[465px] h-[255px] w-[508px] shadow-[0_2px_8px_3px_rgba(0,0,0,0.35)]" />
      <MainWindow />
      <QueryWindow />
      <Taskbar />
      <svg width="12" height="20" viewBox="0 0 12 20" className="absolute left-[1343px] top-[48px]"><path d="M.5.800v15.500l3.600-3.400 2.600 6 2.200-1-2.600-5.800h4.900z" fill="#fff" stroke="#111" /></svg>
    </div>
  );
}
